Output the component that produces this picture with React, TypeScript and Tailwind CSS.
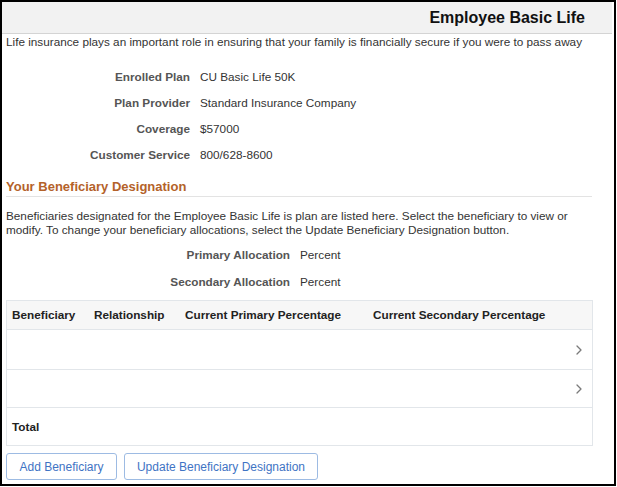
import React from "react";

const font = { fontFamily: '"Liberation Sans", Arial, sans-serif' };

function Chevron() {
  return (
    <svg width="8" height="12" viewBox="0 0 8 12" className="text-[#7a7a7a]">
      <polyline points="2,2 6,6 2,10" fill="none" stroke="currentColor" strokeWidth="1.3" strokeLinecap="round" strokeLinejoin="round" />
    </svg>
  );
}

export default function App() {
  return (
    <div style={font} className="w-[617px] h-[487px] bg-white">
      <div className="w-[616px] h-[486px] border-2 border-black bg-white flex flex-col text-[11.75px] text-[#333] leading-[14px]">
        <div className="h-[32px] mr-[2px] bg-[#f2f2f2] border-b border-[#d4d4d4] flex items-center justify-end pr-[27px]">
          <span className="text-[16px] font-bold text-[#111] leading-[18px]">Employee Basic Life</span>
        </div>
        <div className="px-[4px] mt-[1px]">
          Life insurance plays an important role in ensuring that your family is financially secure if you were to pass away
        </div>
        <div className="mt-[20px] grid grid-cols-[188px_1fr] gap-x-[10px] gap-y-[10px] leading-[16px]">
          <div className="text-right font-bold text-[#555]">Enrolled Plan</div>
          <div>CU Basic Life 50K</div>
          <div className="text-right font-bold text-[#555]">Plan Provider</div>
          <div>Standard Insurance Company</div>
          <div className="text-right font-bold text-[#555]">Coverage</div>
          <div>$57000</div>
          <div className="text-right font-bold text-[#555]">Customer Service</div>
          <div>800/628-8600</div>
        </div>
        <div className="mt-[16px] ml-[4px] w-[586px] border-b border-[#e3e3e3] text-[13px] font-bold text-[#b4622a] leading-[16px] pb-[1px]">
          Your Beneficiary Designation
        </div>
        <div className="px-[4px] mt-[12px] pr-[20px]">
          Beneficiaries designated for the Employee Basic Life is plan are listed here. Select the beneficiary to view or modify. To change your beneficiary allocations, select the Update Beneficiary Designation button.
        </div>
        <div className="mt-[10px] grid grid-cols-[288px_1fr] gap-x-[10px] gap-y-[11px] leading-[16px]">
          <div className="text-right font-bold text-[#555]">Primary Allocation</div>
          <div>Percent</div>
          <div className="text-right font-bold text-[#555]">Secondary Allocation</div>
          <div>Percent</div>
        </div>
        <div className="mt-[10px] ml-[4px] w-[587px] border border-[#e2e6ea]">
          <div className="h-[29px] bg-[#f7f7f7] border-b border-[#e2e6ea] flex items-center font-bold text-[#222]">
            <div className="w-[87px] pl-[5px]">Beneficiary</div>
            <div className="w-[91px]">Relationship</div>
            <div className="w-[188px]">Current Primary Percentage</div>
            <div>Current Secondary Percentage</div>
          </div>
          <div className="h-[40px] border-b border-[#e2e6ea] flex items-center justify-end pr-[9px]">
            <Chevron />
          </div>
          <div className="h-[38px] border-b border-[#e2e6ea] flex items-center justify-end pr-[9px]">
            <Chevron />
          </div>
          <div className="h-[37px] flex items-center pl-[5px] font-bold text-[#222]">Total</div>
        </div>
        <div className="mt-[7px] ml-[4px] flex gap-[7px]">
          <button className="h-[27px] w-[111px] border border-[#9dbbe3] rounded-[3px] bg-white text-[#3f74c4] text-[12px]">
            Add Beneficiary
          </button>
          <button className="h-[27px] w-[194px] border border-[#9dbbe3] rounded-[3px] bg-white text-[#3f74c4] text-[12px]">
            Update Beneficiary Designation
          </button>
        </div>
      </div>
    </div>
  );
}
